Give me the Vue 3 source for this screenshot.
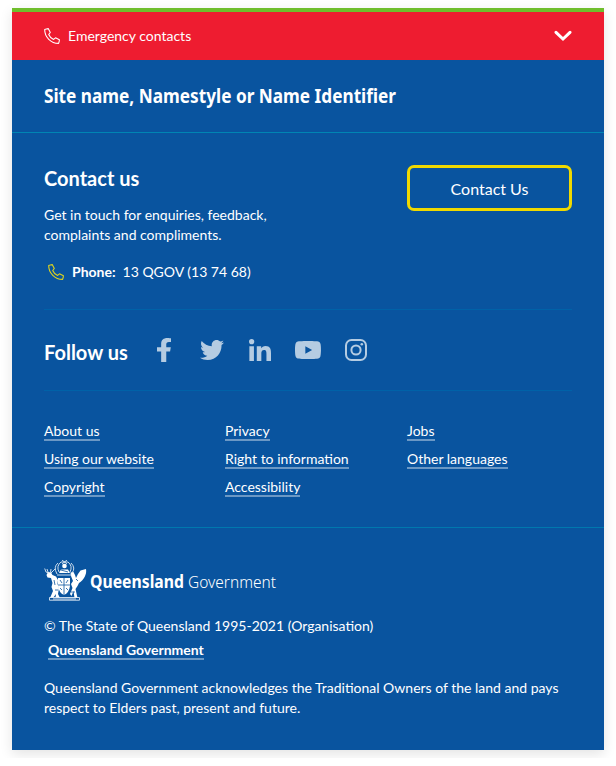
<script setup>
const links = [
  ['About us', 'Using our website', 'Copyright'],
  ['Privacy', 'Right to information', 'Accessibility'],
  ['Jobs', 'Other languages'],
]
const phone = 'M.7 1.5C1.8 1.1 3 .8 4.2.6L6.3 4.5 4.7 6.5C5.6 8.7 7.4 10.5 9.6 11.4L11.5 9.8 15.4 11.7C15.4 13 15 14.3 14.6 15.4 7 15.4.6 9.1.7 1.5Z'
const socials = [
  { name: 'Facebook', box: '22.89 0 274.22 512', w: 14, h: 24, d: 'M279.14 288l14.22-92.66h-88.91v-60.13c0-25.35 12.42-50.06 52.24-50.06h40.42V6.26S260.43 0 225.36 0c-73.22 0-121.08 44.38-121.08 124.72v70.62H22.89V288h81.39v224h100.17V288z' },
  { name: 'Twitter', box: '0 48 512 416', w: 24, h: 20, d: 'M459.37 151.716c.325 4.548.325 9.097.325 13.645 0 138.72-105.583 298.558-298.558 298.558-59.452 0-114.68-17.219-161.137-47.106 8.447.974 16.568 1.299 25.34 1.299 49.055 0 94.213-16.568 130.274-44.832-46.132-.975-84.792-31.188-98.112-72.772 6.498.974 12.995 1.624 19.818 1.624 9.421 0 18.843-1.3 27.614-3.573-48.081-9.747-84.143-51.98-84.143-102.985v-1.299c13.969 7.797 30.214 12.67 47.431 13.319-28.264-18.843-46.781-51.005-46.781-87.391 0-19.492 5.197-37.36 14.294-52.954 51.655 63.675 129.3 105.258 216.365 109.807-1.624-7.797-2.599-15.918-2.599-24.04 0-57.828 46.782-104.934 104.934-104.934 30.213 0 57.502 12.67 76.67 33.137 23.715-4.548 46.456-13.32 66.599-25.34-7.798 24.366-24.366 44.833-46.132 57.827 21.117-2.273 41.584-8.122 60.426-16.243-14.292 20.791-32.161 39.308-52.628 54.253z' },
  { name: 'LinkedIn', box: '0 0 448 448', w: 22, h: 22, d: 'M100.28 448H7.4V148.9h92.88zM53.79 108.1C24.09 108.1 0 83.5 0 53.8a53.79 53.79 0 0 1 107.58 0c0 29.7-24.1 54.3-53.79 54.3zM447.9 448h-92.68V302.4c0-34.7-.7-79.2-48.29-79.2-48.29 0-55.69 37.7-55.69 76.7V448h-92.78V148.9h89.08v40.8h1.3c12.4-23.5 42.69-48.3 87.88-48.3 94 0 111.28 61.9 111.28 142.3V448z' },
  { name: 'YouTube', box: '14.9 64 546.2 384', w: 26, h: 18, d: 'M549.655 124.083c-6.281-23.65-24.787-42.276-48.284-48.597C458.781 64 288 64 288 64S117.22 64 74.629 75.486c-23.497 6.322-42.003 24.947-48.284 48.597-11.412 42.867-11.412 132.305-11.412 132.305s0 89.438 11.412 132.305c6.281 23.65 24.787 41.5 48.284 47.821C117.22 448 288 448 288 448s170.78 0 213.371-11.486c23.497-6.321 42.003-24.171 48.284-47.821 11.412-42.867 11.412-132.305 11.412-132.305s0-89.438-11.412-132.305zm-317.51 213.508V175.185l142.739 81.205-142.739 81.201z' },
]
</script>

<template>
  <footer class="card">
    <div class="emergency">
      <svg class="phone" viewBox="0 0 16 16"><path :d="phone" /></svg>
      <span>Emergency contacts</span>
      <svg class="chevron" viewBox="0 0 18 12"><path d="M2 2.3 9 9 16 2.3" /></svg>
    </div>
    <div class="site">
      <svg class="sitename" viewBox="0 0 360 32"><text x="0" y="22" textLength="352" lengthAdjust="spacingAndGlyphs">Site name, Namestyle or Name Identifier</text></svg>
    </div>
    <div class="main">
      <section class="contact">
        <div>
          <h2>Contact us</h2>
          <p class="intro">Get in touch for enquiries, feedback,<br>complaints and compliments.</p>
          <div class="call">
            <svg class="phone yellow" viewBox="0 0 16 16"><path :d="phone" /></svg>
            <b>Phone:</b><span>13 QGOV (13 74 68)</span>
          </div>
        </div>
        <button>Contact Us</button>
      </section>
      <section class="follow">
        <h2>Follow us</h2>
        <div class="socials">
          <a v-for="s in socials" :key="s.name"><svg :viewBox="s.box" :width="s.w" :height="s.h" preserveAspectRatio="none"><path :d="s.d" /></svg></a>
          <a><svg class="insta" viewBox="0 0 22 22" width="22" height="22"><rect x="1" y="1" width="20" height="20" rx="5.5" /><circle cx="11" cy="11" r="4.6" /><circle class="dot" cx="16.8" cy="5.2" r="1.3" /></svg></a>
        </div>
      </section>
      <nav>
        <ul v-for="(col, i) in links" :key="i">
          <li v-for="l in col" :key="l"><a class="link">{{ l }}</a></li>
        </ul>
      </nav>
    </div>
    <div class="legal">
      <div class="logo">
        <svg class="arms" viewBox="0 0 43 41">
          <g class="solid">
            <path d="M4 12 7 12.5 8.5 15 12 16.5 14 20 13.5 24 15 28 14 34 16 38 11.5 38 12 34 9 38H6L9 31 7.5 27 8.5 23 7 18 3.5 17.5 2.5 15Z" />
            <path d="M42 9C43 14 40 20 35 23L33.5 26 31.5 29 33.5 38H30.5L29.5 31 27.5 36 26 34 28.5 28 27 24 29 21 27 16 26.5 12.5 29.5 12 31 15 32 18 34 14 36.5 10.5Z" />
            <circle cx="20.5" cy="6" r="2.3" />
            <path d="M17 9.5h7l2 3.5h-11ZM14 18h12v8q-1 7-6 9-5-2-6-9Z" />
          </g>
          <path class="line" d="M.7 8.5 2 12 5 13M3 9l1 3M7 9l-.5 3.5M11 9 7 13M14 3Q9 7 13 14M17 2Q12 6 15 12M24 2q5 4 2 10M27 3q5 5 1 10M17 2h7M18 0l5 4M23 0l-5 4M13 15h15M5.5 37.5h30v2.7h-30ZM9 39h23" />
          <path class="cut" d="M20 17v18M14 25h12M16 20l2 3M24 20l-2 3M16 28l2 2M22 28l2 2M10 20l1 5M32 19l2 2M17 10l7 2M11 30h3M27 32h4M16 17h8" />
        </svg>
        <svg class="wordmark" viewBox="0 0 190 30"><text class="q" x="0" y="21" textLength="94" lengthAdjust="spacingAndGlyphs">Queensland</text><text class="g" x="98" y="21" textLength="88" lengthAdjust="spacingAndGlyphs">Government</text></svg>
      </div>
      <p>© The State of Queensland 1995-2021 (Organisation)</p>
      <div class="gov"><a class="link">Queensland Government</a></div>
      <p>Queensland Government acknowledges the Traditional Owners of the land and pays<br>respect to Elders past, present and future.</p>
    </div>
  </footer>
</template>

<style>
body { background: #fff; }
</style>
<style scoped>
* { box-sizing: border-box; }
.card { width: 592px; height: 742px; margin: 8px 12px; background: #09549f; color: #fff; border-top: 4px solid #6fbe2c; box-shadow: 0 4px 12px rgba(0, 0, 0, .11); font: 14px/20px Lato, sans-serif; }
.emergency { height: 48px; background: #ee1c30; display: flex; align-items: center; padding: 0 32px; }
.phone { width: 16px; height: 16px; margin-right: 8px; overflow: visible; }
.phone path { fill: none; stroke: #fff; stroke-width: 1.1; stroke-linejoin: round; }
.phone.yellow path { stroke: #e0d51c; }
.chevron { width: 18px; height: 12px; margin-left: auto; }
.chevron path { fill: none; stroke: #fff; stroke-width: 3; stroke-linecap: round; }
.site { height: 73px; border-bottom: 1px solid #0085b3; padding: 21px 32px 0; }
.sitename { display: block; width: 360px; height: 32px; }
.sitename text { font: bold 20px "Noto Sans", sans-serif; fill: #fff; }
.main { padding: 0 32px; height: 394px; }
.contact { display: flex; justify-content: space-between; height: 177px; padding-top: 32px; border-bottom: 1px solid #0062a8; }
h2 { margin: 0; font-size: 20px; line-height: 26px; font-weight: 700; }
.intro { margin: 14px 0 17px; }
.call { display: flex; align-items: center; padding-left: 4px; }
.call b { margin-right: 7px; }
button { width: 165px; height: 46px; border: 3px solid #f0d900; border-radius: 7px; background: none; color: #fff; font: 16px Lato, sans-serif; padding: 0; }
.follow { display: flex; height: 81px; align-items: center; border-bottom: 1px solid #0062a8; }
.follow h2 { width: 96px; padding-top: 4px; white-space: nowrap; }
.socials { display: flex; }
.socials a { width: 48px; height: 24px; display: flex; align-items: center; justify-content: center; }
.socials svg { fill: #b5cce2; display: block; }
.socials .insta { fill: none; stroke: #b5cce2; stroke-width: 2; }
.insta .dot { fill: #b5cce2; stroke: none; }
nav { display: grid; grid-template-columns: 181px 182px 1fr; padding-top: 30px; }
ul { list-style: none; margin: 0; padding: 0; }
li { height: 28px; }
.link { display: inline-block; height: 20px; line-height: 20px; border-bottom: 2px solid #6b98c5; }
.legal { border-top: 1px solid #0078ae; padding: 32px 32px 0; }
.logo { display: flex; height: 41px; }
.arms { width: 43px; height: 41px; }
.arms .solid { fill: #fff; }
.arms .line { fill: none; stroke: #e1ebf5; stroke-width: .9; }
.arms .cut { fill: none; stroke: #09549f; stroke-width: .8; }
.wordmark { width: 190px; height: 30px; margin: 7px 0 0 3px; }
.wordmark text { fill: #fff; font-family: "Noto Sans", sans-serif; font-size: 17px; }
.wordmark .q { font-weight: 700; }
.wordmark .g { font-weight: 300; }
p { margin: 0; }
.logo + p { margin-top: 15px; }
.gov { margin: 4px 0 18px 4px; height: 20px; font-weight: 700; }
</style>
